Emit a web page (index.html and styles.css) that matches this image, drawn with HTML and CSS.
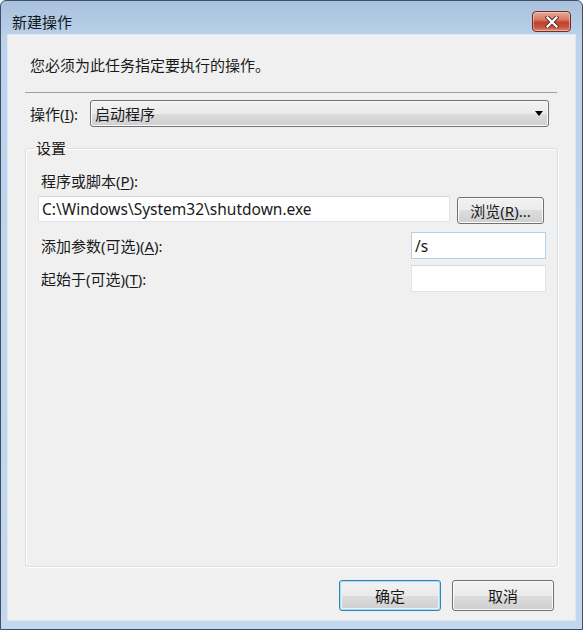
FILE: index.html
```
<!DOCTYPE html>
<html lang="zh-CN">
<head>
  <meta charset="UTF-8">
  <title>新建操作</title>
  <link rel="stylesheet" href="styles.css">
</head>
<body>
  <div class="window">
    <div class="titlebar">
      <span class="title">新建操作</span>
      <button class="close" aria-label="关闭">
        <svg width="14" height="12" viewBox="0 0 14 12">
          <path d="M2.5 1.5 L11.5 10.5 M11.5 1.5 L2.5 10.5" stroke="#5a2a24" stroke-width="4" stroke-linecap="square"/>
          <path d="M2.5 1.5 L11.5 10.5 M11.5 1.5 L2.5 10.5" stroke="#fff" stroke-width="2.2" stroke-linecap="square"/>
        </svg>
      </button>
    </div>

    <div class="client">
      <p class="intro">您必须为此任务指定要执行的操作。</p>
      <div class="sep"></div>

      <div class="action-row">
        <label class="action-label">操作(<u>I</u>):</label>
        <div class="combo">
          <span>启动程序</span>
          <span class="arrow"></span>
        </div>
      </div>

      <fieldset class="group">
        <legend>设置</legend>
        <label class="field-label">程序或脚本(<u>P</u>):</label>
        <div class="path-row">
          <div class="textbox path">C:\Windows\System32\shutdown.exe</div>
          <button class="btn browse">浏览(<u>R</u>)...</button>
        </div>
        <div class="param-row">
          <label>添加参数(可选)(<u>A</u>):</label>
          <div class="textbox small focused">/s</div>
        </div>
        <div class="param-row second">
          <label>起始于(可选)(<u>T</u>):</label>
          <div class="textbox small"></div>
        </div>
      </fieldset>

      <div class="footer">
        <button class="btn default">确定</button>
        <button class="btn">取消</button>
      </div>
    </div>
  </div>
</body>
</html>
```

FILE: styles.css
```
* {
  box-sizing: border-box;
}
body {
  margin: 0;
  font-family: 'Noto Sans', 'Noto Sans CJK SC', sans-serif;
  font-size: 15px;
  color: #1a1a1a;
  background: #fff;
}
u {
  text-decoration: underline;
  text-underline-offset: 2px;
}
.window {
  width: 583px;
  height: 630px;
  border: 1px solid #3e5068;
  border-radius: 6px 6px 0 0;
  background: linear-gradient(#a9c1dd, #bcd3eb 40px, #c3d8ef);
  padding: 0 7px 9px 7px;
  display: flex;
  flex-direction: column;
}
.titlebar {
  height: 34px;
  display: flex;
  align-items: flex-start;
  justify-content: space-between;
}
.title {
  margin: 11px 0 0 4px;
  line-height: 20px;
  font-size: 15px;
  color: #101820;
}
.close {
  margin: 10px 4px 0 0;
  width: 39px;
  height: 21px;
  padding: 0;
  border: 1px solid #6e2d25;
  border-radius: 4px;
  background: linear-gradient(#e8a898 0%, #d87a66 40%, #c0402c 55%, #c8553f 80%, #dc8c74 100%);
  box-shadow: inset 0 0 0 1px rgba(255, 220, 210, 0.5);
  display: flex;
  align-items: center;
  justify-content: center;
}
.client {
  flex: 1;
  background: #f0f0f0;
  box-shadow: 0 0 0 1px #dfe8f2;
  display: flex;
  flex-direction: column;
  padding: 0 17px 0 17px;
}
.intro {
  margin: 20px 0 0 5px;
  line-height: 20px;
}
.sep {
  margin: 17px 1px 0 0;
  border-top: 1px solid #a0a0a0;
}
.action-row {
  margin: 7px 9px 0 5px;
  display: flex;
  align-items: center;
}
.action-label {
  width: 60px;
}
.combo {
  flex: 1;
  height: 27px;
  border: 1px solid #707070;
  border-radius: 3px;
  background: linear-gradient(#f2f2f2 0%, #ebebeb 50%, #dddddd 50%, #cfcfcf 100%);
  box-shadow: inset 0 0 0 1px #fbfbfb;
  display: flex;
  align-items: center;
  justify-content: space-between;
  padding: 0 5px 0 4px;
}
.arrow {
  width: 0;
  height: 0;
  border-left: 4px solid transparent;
  border-right: 4px solid transparent;
  border-top: 5px solid #000;
}
.group {
  flex: 1;
  min-height: 0;
  margin: 11px 0 0 0;
  border: 1px solid #d5dfe5;
  border-radius: 3px;
  box-shadow: inset 1px 1px 0 #fff, 1px 1px 0 #fff;
  padding: 13px 11px 0 12px;
}
.group legend {
  margin-left: -4px;
  padding: 0 2px;
  line-height: 20px;
}
.field-label {
  display: block;
  margin-left: 3px;
  line-height: 20px;
}
.path-row {
  margin-top: 5px;
  display: flex;
  align-items: flex-start;
  gap: 7px;
}
.textbox {
  background: #fff;
  border: 1px solid #e2e3ea;
  border-top-color: #d6d8de;
  padding: 0 3px;
  display: flex;
  align-items: center;
}
.path {
  width: 412px;
  height: 26px;
  font-size: 15.5px;
}
.small {
  width: 135px;
  height: 27px;
  font-size: 15.5px;
}
.focused {
  border-color: #b5cfe7;
}
.param-row {
  margin-top: 8px;
  display: flex;
  align-items: center;
  justify-content: space-between;
}
.param-row.second {
  margin-top: 6px;
}
.param-row label {
  margin-left: 3px;
}
.btn {
  font-family: inherit;
  font-size: 15px;
  color: #1a1a1a;
  border: 1px solid #707070;
  border-radius: 3px;
  background: linear-gradient(#f2f2f2 0%, #ebebeb 50%, #dddddd 50%, #cfcfcf 100%);
  box-shadow: inset 0 0 0 1px #fbfbfb;
  padding: 0;
  cursor: pointer;
}
.browse {
  margin-top: 1px;
  width: 87px;
  height: 27px;
}
.footer {
  display: flex;
  justify-content: flex-end;
  gap: 11px;
  padding: 13px 4px 9px 0;
}
.footer .btn {
  width: 102px;
  height: 31px;
}
.btn.default {
  border-color: #3c7fb1;
  box-shadow: inset 0 0 0 1px #a6dcf5, inset 0 0 0 2px #e2f3fb;
}
```
